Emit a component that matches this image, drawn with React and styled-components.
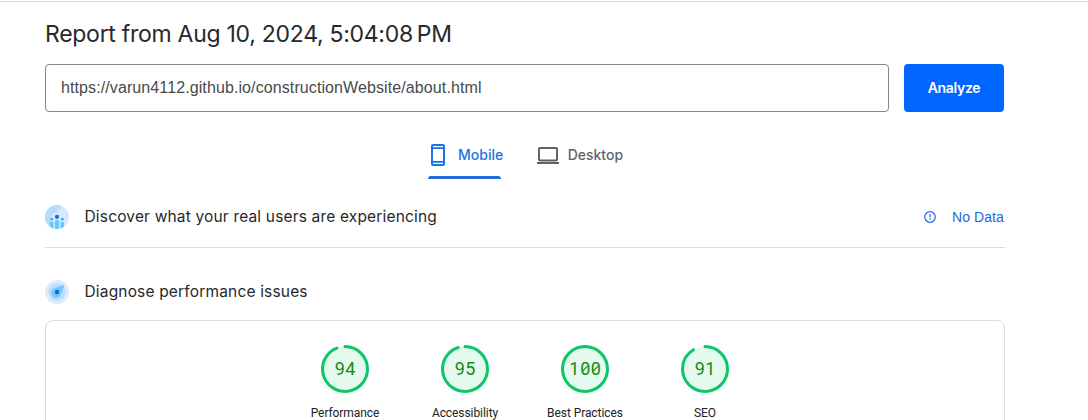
import React from "react";
import styled, { createGlobalStyle } from "styled-components";

const GlobalStyle = createGlobalStyle`
  * { box-sizing: border-box; }
  html, body { margin: 0; background: #fff; overflow: hidden; }
`;

const Page = styled.div`
  height: 420px;
  overflow: hidden;
  border-top: 1px solid #fff;
  color: #27282b;
  font-family: Inter, "Open Sans", sans-serif;
`;

const TopRule = styled.div`
  height: 1px;
  background: #dadce0;
`;

const Content = styled.main`
  width: 960px;
  margin-left: 45px;
`;

const Title = styled.h1`
  margin: 0;
  padding-top: 16px;
  height: 62px;
  font-size: 23px;
  font-weight: 400;
  line-height: 32px;
  letter-spacing: -0.28px;
  white-space: nowrap;
`;

const SearchRow = styled.form`
  display: flex;
  gap: 15px;
  height: 48px;
`;

const UrlField = styled.div`
  width: 844px;
  padding-left: 15px;
  border: 1px solid #80868b;
  border-radius: 4px;
  color: #484a4d;
  font: 16px/46px "Liberation Sans", Arial, sans-serif;
  letter-spacing: 0.1px;
`;

const AnalyzeButton = styled.button`
  width: 100px;
  padding: 0;
  border: 0;
  border-radius: 4px;
  background: #06f;
  color: #fff;
  font: 600 14px/48px Inter, sans-serif;
  letter-spacing: -0.3px;
`;

const Tabs = styled.nav`
  display: flex;
  gap: 34px;
  margin: 20px 0 0 383px;
  height: 48px;
`;

const Tab = styled.div`
  position: relative;
  display: flex;
  align-items: center;
  gap: ${(p) => p.$gap};
  padding-bottom: 3px;
  color: ${(p) => (p.$active ? "#1a73e8" : "#5f6368")};
  font-size: 14px;
  font-weight: 500;
  white-space: nowrap;
`;

const TabIndicator = styled.span`
  position: absolute;
  left: 0;
  bottom: 1px;
  width: 73px;
  height: 3px;
  border-radius: 3px 3px 0 0;
  background: #1f6bdb;
`;

const SectionHeader = styled.section`
  display: flex;
  align-items: center;
  height: ${(p) => p.$height};
  padding-top: ${(p) => p.$top};
  border-bottom: ${(p) => (p.$ruled ? "1px solid #dadce0" : "0")};
`;

const SectionTitle = styled.h2`
  margin: 0 auto 0 15.5px;
  font-size: 15.5px;
  font-weight: 400;
  line-height: 24px;
  letter-spacing: 0.17px;
  white-space: nowrap;
`;

const NoData = styled.div`
  display: flex;
  align-items: center;
  gap: 16px;
  padding-right: 1px;
  color: #1769e0;
  font: 14px/20px "Liberation Sans", Arial, sans-serif;
  letter-spacing: 0.1px;
  white-space: nowrap;
`;

const ReportCard = styled.section`
  display: flex;
  justify-content: center;
  height: 120px;
  padding: 24px 0 0;
  border: 1px solid #dadce0;
  border-radius: 8px;
`;

const GaugeItem = styled.div`
  display: flex;
  flex-direction: column;
  align-items: center;
  width: 120px;
`;

const GaugeDial = styled.svg`
  display: block;
  width: 48px;
  height: 48px;
`;

const GaugeScore = styled.text`
  fill: #178a0d;
  font: 18px Roboto, sans-serif;
  text-anchor: middle;
`;

const GaugeLabel = styled.div`
  margin-top: 12px;
  color: #212121;
  font: 12px/16px Roboto, sans-serif;
  letter-spacing: -0.07px;
  white-space: nowrap;
`;

const PhoneIcon = () => (
  <svg width="20" height="24" viewBox="0 0 20 24" fill="none" stroke="currentColor" strokeWidth="2">
    <rect x="4" y="2" width="12" height="20" rx="1" />
    <path d="M4 5.2h12M4 18.8h12" strokeWidth="1.7" />
  </svg>
);

const LaptopIcon = () => (
  <svg width="22" height="24" viewBox="0 0 22 24" fill="none" stroke="currentColor" strokeWidth="2">
    <rect x="2" y="5" width="18" height="12.5" rx="1" />
    <path d="M0 20h22" />
  </svg>
);

const UsersIcon = () => (
  <svg width="24" height="24" viewBox="0 0 24 24">
    <defs>
      <clipPath id="users-disc"><circle cx="12" cy="12" r="12" /></clipPath>
    </defs>
    <g clipPath="url(#users-disc)">
      <rect width="24" height="24" fill="#d7e7fd" />
      <path d="M0 0h16v4q-4 0-4 4H8q0 4-4 4l3 4-3 6H0z" fill="#bcd8fb" />
      <circle cx="6.7" cy="14.2" r="1.4" fill="#2fb4f4" />
      <circle cx="17.3" cy="14.2" r="1.4" fill="#2fb4f4" />
      <path d="M4.9 17h3.6v7H4.9zM15.5 17h3.6v7h-3.6z" fill="#63c9f6" />
      <path d="M10 16.3q0-1.5 2-1.5t2 1.5v8h-4z" fill="#63c9f6" />
    </g>
    <circle cx="12" cy="11.8" r="2.1" fill="#1767dc" />
  </svg>
);

const CompassIcon = () => (
  <svg width="24" height="24" viewBox="0 0 24 24">
    <circle cx="12" cy="12" r="12" fill="#deebfd" />
    <circle cx="12" cy="12" r="8.7" fill="#bfdcfc" />
    <path d="M19.5 4.5 15.7 14.8A5 5 0 1 1 9.3 8.2z" fill="#70c8fb" />
    <circle cx="12" cy="12" r="2.2" fill="#0869ed" />
  </svg>
);

const AlertIcon = () => (
  <svg width="12" height="12" viewBox="0 0 12 12" fill="none" stroke="currentColor" strokeWidth="1.2">
    <circle cx="6" cy="6" r="5.3" />
    <path d="M6 3v3.6M6 7.6v1.3" />
  </svg>
);

const CIRCUMFERENCE = 2 * Math.PI * 22.5;

function Gauge({ score, label, gap }) {
  const full = score === 100;
  return (
    <GaugeItem>
      <GaugeDial viewBox="0 0 48 48">
        <circle cx="24" cy="24" r="22.5" fill="#e5faef" />
        <circle
          cx="24" cy="24" r="22.5" fill="none" stroke="#0cc668" strokeWidth="3"
          strokeLinecap={full ? "butt" : "round"}
          strokeDasharray={full ? undefined : `${CIRCUMFERENCE - gap} ${CIRCUMFERENCE}`}
          transform="rotate(-90 24 24)"
        />
        {full ? (
          <>
            <GaugeScore x="13.4" y="30.3">1</GaugeScore>
            <GaugeScore x="24.2" y="30.3">0</GaugeScore>
            <GaugeScore x="34.8" y="30.3">0</GaugeScore>
            <path d="m21.6 26.2 5.1-5.4M32.2 26.2l5.1-5.4" stroke="#178a0d" strokeWidth="1.2" />
          </>
        ) : (
          <GaugeScore x="24.3" y="30.3" letterSpacing="0.4">{score}</GaugeScore>
        )}
      </GaugeDial>
      <GaugeLabel>{label}</GaugeLabel>
    </GaugeItem>
  );
}

export default function App() {
  return (
    <Page>
      <GlobalStyle />
      <TopRule />
      <Content>
        <Title>Report from Aug 10, 2024, 5:04:08{"\u202f"}PM</Title>
        <SearchRow>
          <UrlField>https://varun4112.github.io/constructionWebsite/about.html</UrlField>
          <AnalyzeButton type="button">Analyze</AnalyzeButton>
        </SearchRow>
        <Tabs>
          <Tab $active $gap="10px">
            <PhoneIcon />
            Mobile
            <TabIndicator />
          </Tab>
          <Tab $gap="8.5px">
            <LaptopIcon />
            Desktop
          </Tab>
        </Tabs>
        <SectionHeader $height="68px" $top="7px" $ruled>
          <UsersIcon />
          <SectionTitle>Discover what your real users are experiencing</SectionTitle>
          <NoData><AlertIcon />No Data</NoData>
        </SectionHeader>
        <SectionHeader $height="72px" $top="16px">
          <CompassIcon />
          <SectionTitle>Diagnose performance issues</SectionTitle>
        </SectionHeader>
        <ReportCard>
          <Gauge score={94} label="Performance" gap={9.2} />
          <Gauge score={95} label="Accessibility" gap={7.8} />
          <Gauge score={100} label="Best Practices" />
          <Gauge score={91} label="SEO" gap={13} />
        </ReportCard>
      </Content>
    </Page>
  );
}
